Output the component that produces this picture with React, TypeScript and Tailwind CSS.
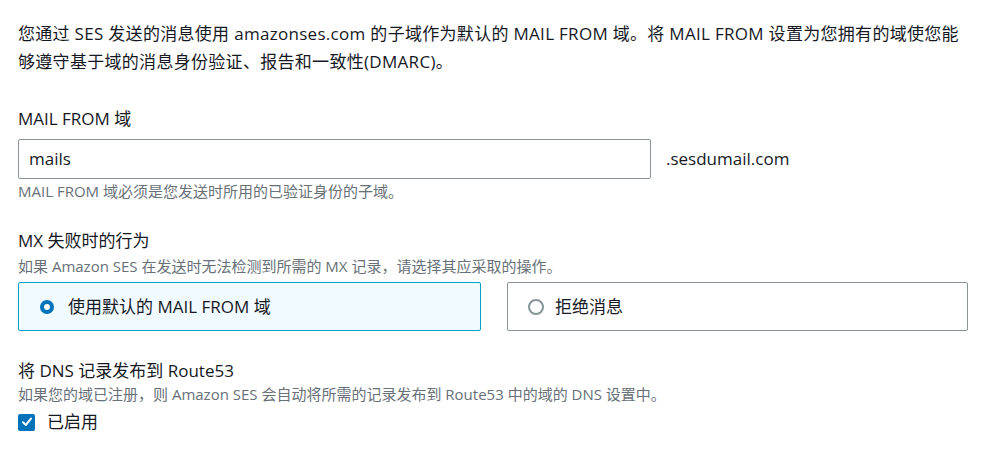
import React from "react";

const font = {
  fontFamily: '"Open Sans", "Noto Sans CJK SC", sans-serif',
};

function Radio({ checked }: { checked: boolean }) {
  return checked ? (
    <span className="box-border inline-block h-[14px] w-[14px] shrink-0 rounded-full border-[4px] border-[#0073bb] bg-white" />
  ) : (
    <span className="box-border inline-block h-[16px] w-[16px] shrink-0 rounded-full border-[2px] border-[#879596] bg-white" />
  );
}

export default function App() {
  return (
    <div className="min-h-[458px] w-[988px] bg-white text-[#16191f]" style={font}>
      <div className="px-[18px] pt-[20px]">
        {/* Intro */}
        <p className="w-[948px] text-[17px] leading-[28px] tracking-[0.3px]">
          您通过 SES 发送的消息使用 amazonses.com 的子域作为默认的 MAIL FROM 域。将 MAIL FROM 设置为您拥有的域使您能够遵守基于域的消息身份验证、报告和一致性(DMARC)。
        </p>

        {/* MAIL FROM domain */}
        <div className="mt-[31px]">
          <div className="text-[17px] leading-[24px]">MAIL FROM 域</div>
          <div className="mt-[8px] flex items-center">
            <div className="box-border flex h-[40px] w-[633px] items-center rounded-[2px] border border-[#879596] px-[10px] text-[17px]">
              mails
            </div>
            <span className="ml-[15px] text-[17px]">.sesdumail.com</span>
          </div>
          <div className="mt-[2px] text-[15px] leading-[20px] text-[#687078]">
            MAIL FROM 域必须是您发送时所用的已验证身份的子域。
          </div>
        </div>

        {/* MX failure behavior */}
        <div className="mt-[28px]">
          <div className="text-[17px] leading-[24px]">MX 失败时的行为</div>
          <div className="mt-[3px] text-[15px] leading-[20px] text-[#687078]">
            如果 Amazon SES 在发送时无法检测到所需的 MX 记录，请选择其应采取的操作。
          </div>
          <div className="mt-[6px] flex gap-[26px]">
            <div className="box-border flex h-[49px] w-[463px] items-center gap-[14px] rounded-[2px] border border-[#00a1c9] bg-[#f1faff] px-[21px] text-[17px]">
              <Radio checked />
              <span>使用默认的 MAIL FROM 域</span>
            </div>
            <div className="box-border flex h-[49px] w-[461px] items-center gap-[11px] rounded-[2px] border border-[#879596] bg-white px-[20px] text-[17px]">
              <Radio checked={false} />
              <span>拒绝消息</span>
            </div>
          </div>
        </div>

        {/* Route53 */}
        <div className="mt-[28px]">
          <div className="text-[17px] leading-[24px]">将 DNS 记录发布到 Route53</div>
          <div className="mt-[1px] text-[15px] leading-[20px] text-[#687078]">
            如果您的域已注册，则 Amazon SES 会自动将所需的记录发布到 Route53 中的域的 DNS 设置中。
          </div>
          <div className="mt-[6px] flex items-center gap-[12px]">
            <span className="flex h-[17px] w-[17px] items-center justify-center rounded-[2px] bg-[#0073bb]">
              <svg width="12" height="12" viewBox="0 0 12 12" fill="none">
                <path d="M2 6.2 L4.8 9 L10 2.6" stroke="white" strokeWidth="2" strokeLinecap="round" strokeLinejoin="round" />
              </svg>
            </span>
            <span className="text-[17px] leading-[24px]">已启用</span>
          </div>
        </div>
      </div>
    </div>
  );
}
